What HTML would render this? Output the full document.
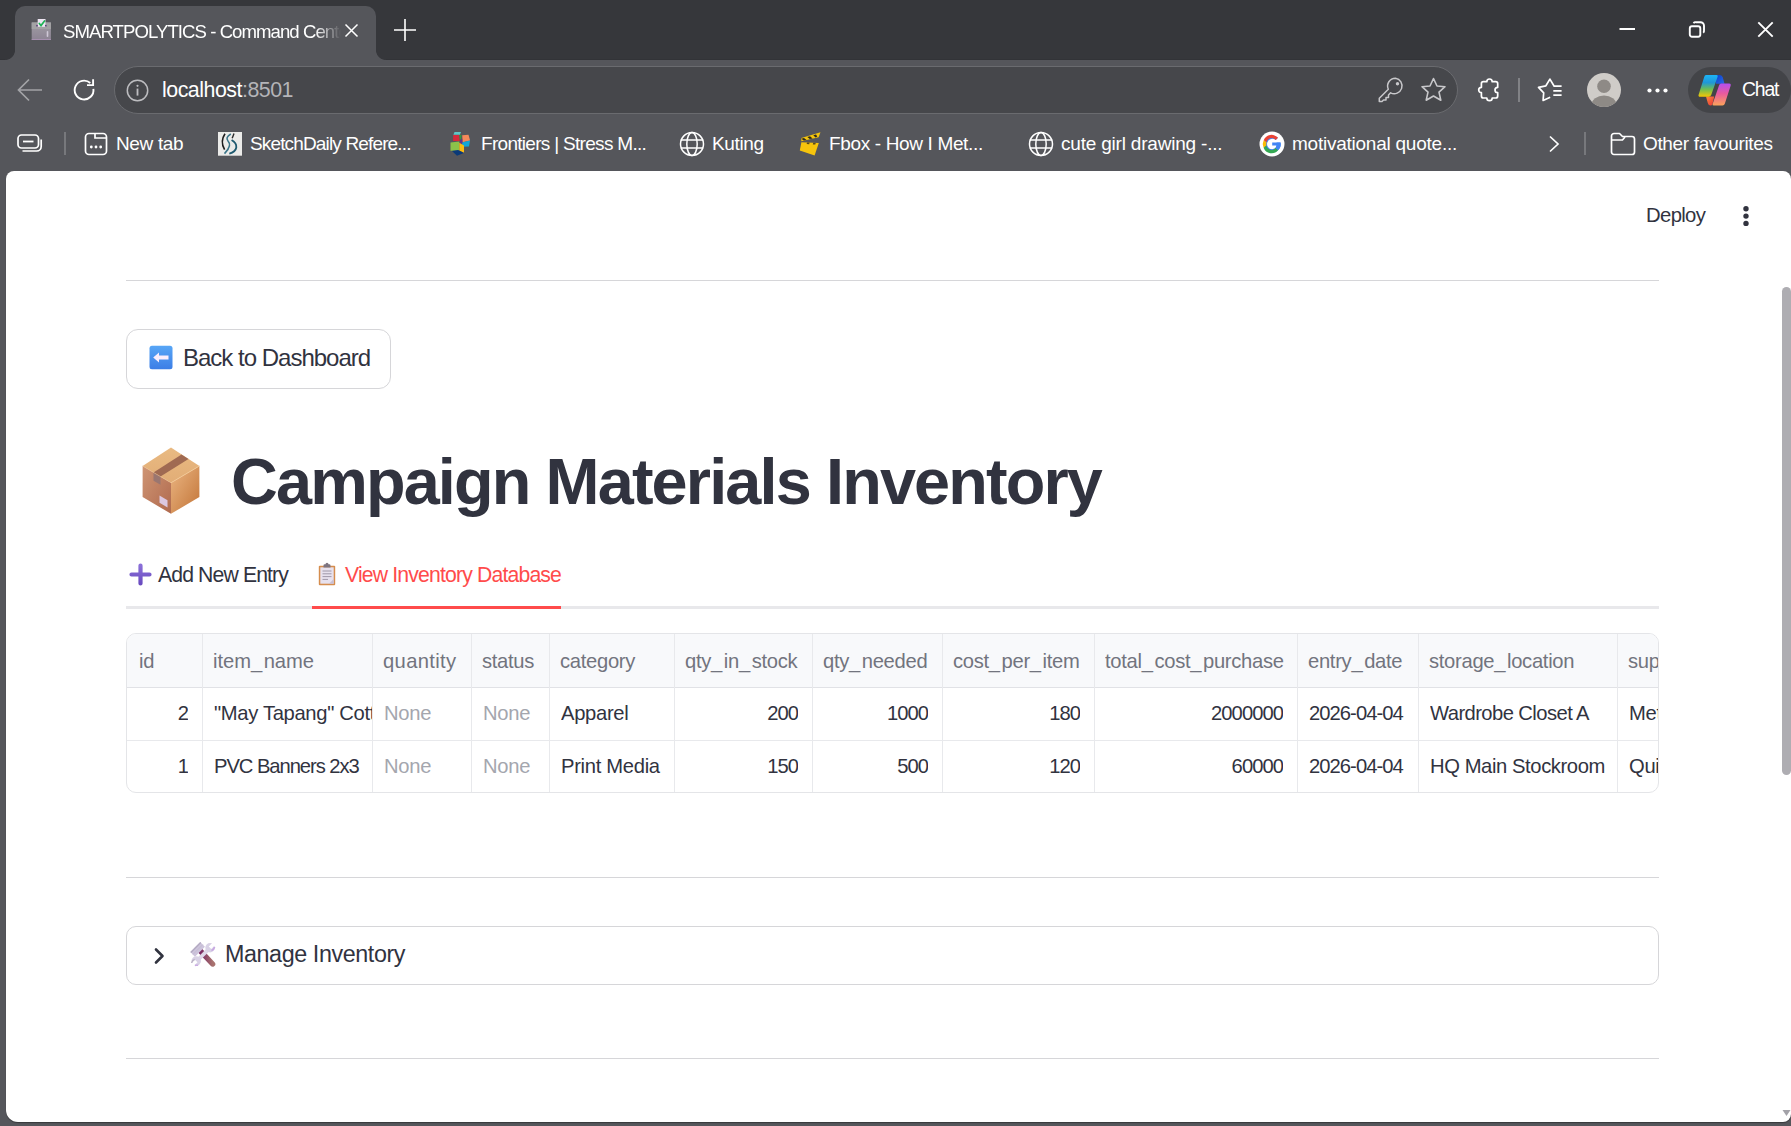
<!DOCTYPE html>
<html>
<head>
<meta charset="utf-8">
<style>
*{box-sizing:border-box;margin:0;padding:0}
html,body{width:1791px;height:1126px;overflow:hidden;background:#55565b;font-family:"Liberation Sans",sans-serif}
.abs{position:absolute}
.t{position:absolute;line-height:1;white-space:nowrap}
svg{position:absolute;overflow:visible}
/* chrome */
#strip{left:0;top:0;width:1791px;height:60px;background:#36373b;box-shadow:inset 0 -1px 0 #323337}
#tab{left:15px;top:6px;width:361px;height:54px;background:#55565b;border-radius:10px 10px 0 0}
#tab:before,#tab:after{content:"";position:absolute;bottom:0;width:10px;height:10px}
#tab:before{left:-10px;background:radial-gradient(circle at 0 0,#36373b 9.6px,#55565b 10.4px)}
#tab:after{right:-10px;background:radial-gradient(circle at 100% 0,#36373b 9.6px,#55565b 10.4px)}
#addr{left:114px;top:66px;width:1344px;height:48px;background:#46474b;border:1px solid #6a6b6f;border-radius:24px}
#chat{left:1688px;top:67px;width:103px;height:46px;background:#434448;border-radius:23px}
#content{left:6px;top:171px;width:1785px;height:951px;background:#fff;border-radius:8px 8px 8px 12px;box-shadow:0 1px 1px rgba(0,0,0,.35)}
.hr{position:absolute;left:126px;width:1533px;height:1px;background:#d6d6d9}
.st{color:#31333f}
.cell{position:absolute;line-height:28px;white-space:nowrap;overflow:hidden;font-size:20.2px;letter-spacing:-0.3px;color:#31333f}
.hd{top:12.6px;color:#72747e}
.r1{top:65px}
.r2{top:117.7px}
.nn{color:#a4a6ae}
.num{letter-spacing:-0.95px}
.u{letter-spacing:1.5px}
.bm{top:134.3px;font-size:19px;letter-spacing:-0.35px;color:#fff}
</style>
</head>
<body>
<!-- TAB STRIP -->
<div id="strip" class="abs"></div>
<div id="tab" class="abs"></div>
<!-- favicon: ballot box -->
<svg style="left:31px;top:18px" width="21" height="23" viewBox="0 0 21 23">
  <defs><linearGradient id="bb" x1="0" y1="0" x2="0" y2="1"><stop offset="0" stop-color="#a09ca4"/><stop offset="1" stop-color="#8d8494"/></linearGradient></defs>
  <rect x="0.7" y="4.5" width="19.2" height="17.5" fill="url(#bb)"/>
  <rect x="0.7" y="4.5" width="19.2" height="6.5" fill="#a3a3a5"/>
  <rect x="0.7" y="21" width="19.2" height="1" fill="#a790b0"/>
  <rect x="6.7" y="1" width="7.8" height="7.8" fill="#eee6f3"/>
  <circle cx="6" cy="7.7" r="0.9" fill="#5b3f78"/><circle cx="14.8" cy="7.7" r="0.9" fill="#5b3f78"/>
  <path d="M8.3 5.5L10 7.6L13.5 3" stroke="#1fb356" stroke-width="1.7" fill="none" stroke-linecap="round"/>
  <rect x="15.7" y="13" width="1.6" height="6" rx="0.8" fill="#cfc8d6"/>
</svg>
<div class="t" id="tabtitle" style="left:63px;top:22.6px;font-size:18.6px;letter-spacing:-0.95px;color:#fff;width:282px;overflow:hidden;-webkit-mask-image:linear-gradient(90deg,#000 252px,transparent 278px)">SMARTPOLYTICS - Command Center</div>
<svg style="left:345px;top:24px" width="13" height="13" viewBox="0 0 13 13"><path d="M0.5 0.5L12.5 12.5M12.5 0.5L0.5 12.5" stroke="#fff" stroke-width="1.5"/></svg>
<svg style="left:394px;top:19px" width="22" height="22" viewBox="0 0 22 22"><path d="M11 0V22M0 11H22" stroke="#fff" stroke-width="1.6"/></svg>
<!-- window controls -->
<svg style="left:1619px;top:22px" width="17" height="16" viewBox="0 0 17 16"><path d="M0.5 7H16" stroke="#fff" stroke-width="2"/></svg>
<svg style="left:1688px;top:21px" width="18" height="17" viewBox="0 0 18 17"><rect x="1.8" y="5.2" width="10.5" height="10.5" rx="2.2" stroke="#fff" stroke-width="1.9" fill="none"/><path d="M5.5 2.2A2.5 2.5 0 0 1 8 1.2H12.5A3.5 3.5 0 0 1 16 4.7V9.5A2.5 2.5 0 0 1 15.2 11.8" stroke="#fff" stroke-width="1.9" fill="none"/></svg>
<svg style="left:1757px;top:21px" width="17" height="17" viewBox="0 0 17 17"><path d="M1.3 1.3L15.7 15.7M15.7 1.3L1.3 15.7" stroke="#fff" stroke-width="1.9"/></svg>

<!-- TOOLBAR -->
<svg style="left:17px;top:78px" width="26" height="24" viewBox="0 0 26 24"><path d="M25 12H2M12 1.5L1.5 12L12 22.5" stroke="#a3a3a7" stroke-width="1.7" fill="none"/></svg>
<svg style="left:72px;top:78px" width="24" height="24" viewBox="0 0 24 24"><path d="M21.4 10.8A9.4 9.4 0 1 1 18.3 5" stroke="#fff" stroke-width="1.9" fill="none"/><path d="M15 7.1H21.1V1.2" stroke="#fff" stroke-width="1.9" fill="none"/></svg>
<div id="addr" class="abs"></div>
<svg style="left:126px;top:79px" width="23" height="23" viewBox="0 0 23 23"><circle cx="11.5" cy="11.5" r="10.2" stroke="#bdbdc0" stroke-width="1.5" fill="none"/><rect x="10.6" y="9.6" width="1.8" height="7" fill="#bdbdc0"/><circle cx="11.5" cy="6.8" r="1.1" fill="#bdbdc0"/></svg>
<div class="t" style="left:162px;top:79.8px;font-size:21.4px;letter-spacing:-0.5px;color:#fff">localhost<span style="color:#b4b4b8">:8501</span></div>
<!-- key -->
<svg style="left:1378px;top:77px" width="27" height="26" viewBox="0 0 27 26"><path d="M17.5 1.2A7.8 7.8 0 1 1 12.6 15.8L10.5 18L10.5 20.5L8 20.5L8 23L5.5 23L4 24.5H1.3V21.2L10.3 12.2A7.8 7.8 0 0 1 17.5 1.2Z" stroke="#c8c8cb" stroke-width="1.5" fill="none" stroke-linejoin="round"/><circle cx="19.5" cy="6.8" r="1.7" fill="#c8c8cb"/></svg>
<!-- star -->
<svg style="left:1420px;top:77px" width="27" height="26" viewBox="0 0 27 26"><path d="M13.5 1.5L17 9L25 9.7L19 15.1L20.8 23.2L13.5 19L6.2 23.2L8 15.1L2 9.7L10 9Z" stroke="#c8c8cb" stroke-width="1.6" fill="none" stroke-linejoin="round"/></svg>
<!-- puzzle -->
<svg style="left:1472px;top:74px" width="32" height="32" viewBox="0 0 32 32"><path d="M11.4 7.7H14.8A2.7 2.7 0 0 1 20.2 7.7H23.7A2 2 0 0 1 25.7 9.7V13.3A2.7 2.7 0 0 0 25.7 18.7V22A2 2 0 0 1 23.7 24H20.2A2.7 2.7 0 0 1 14.8 24H11.4A2 2 0 0 1 9.4 22V18.7A2.7 2.7 0 0 1 9.4 13.3V9.7A2 2 0 0 1 11.4 7.7Z" stroke="#fff" stroke-width="1.7" fill="none" stroke-linejoin="round"/></svg>
<div class="abs" style="left:1518px;top:78px;width:1.5px;height:24px;background:#818286"></div>
<!-- favourites -->
<svg style="left:1532px;top:74px" width="36" height="32" viewBox="0 0 36 32"><path d="M18.2 23.2L11.1 26.4L11.7 18.8L6.5 13.4L13.9 11.8L17.9 5.1L22.2 12.2H29.6M21.3 16.8H29.6M21.3 21.2H29.6" stroke="#fff" stroke-width="1.7" fill="none" stroke-linejoin="round"/></svg>
<!-- avatar -->
<svg style="left:1587px;top:73px" width="34" height="34" viewBox="0 0 34 34"><defs><clipPath id="av"><circle cx="17" cy="17" r="17"/></clipPath></defs><circle cx="17" cy="17" r="17" fill="#cfccc8"/><g clip-path="url(#av)"><circle cx="17" cy="13.2" r="6.8" fill="#8e8a86"/><ellipse cx="17" cy="32" rx="12.5" ry="9.5" fill="#8e8a86"/></g></svg>
<svg style="left:1647px;top:88px" width="22" height="5" viewBox="0 0 22 5"><circle cx="2.5" cy="2.5" r="2.1" fill="#fff"/><circle cx="10.5" cy="2.5" r="2.1" fill="#fff"/><circle cx="18.5" cy="2.5" r="2.1" fill="#fff"/></svg>
<div id="chat" class="abs"></div>
<!-- copilot -->
<svg style="left:1698px;top:74.5px" width="34" height="31" viewBox="0 0 34 31">
  <defs>
    <linearGradient id="cpl" x1="0" y1="0" x2="0" y2="1"><stop offset="0" stop-color="#1cb4f6"/><stop offset=".35" stop-color="#1f97d8"/><stop offset=".65" stop-color="#6cbd55"/><stop offset="1" stop-color="#f6c603"/></linearGradient>
    <linearGradient id="cpr" x1="0" y1="0" x2="0" y2="1"><stop offset="0" stop-color="#b54ff0"/><stop offset=".45" stop-color="#e85a9e"/><stop offset="1" stop-color="#fba35a"/></linearGradient>
    <linearGradient id="cpt" x1="0" y1="0" x2="1" y2="1"><stop offset="0" stop-color="#0b3fc7"/><stop offset="1" stop-color="#2a6ae8"/></linearGradient>
    <linearGradient id="cpb" x1="0" y1="0" x2="1" y2="1"><stop offset="0" stop-color="#ff8a3a"/><stop offset="1" stop-color="#e8313a"/></linearGradient>
  </defs>
  <path d="M17 0H22Q24 0 24.8 2.5L26.5 8.8H18Z" fill="url(#cpt)"/>
  <path d="M8 21.6H16.2L14.5 29Q14 30.5 12.5 30.5Q10.5 30.5 9.8 28Z" fill="url(#cpb)"/>
  <path d="M8 0H18.5Q20.2 0 19.7 1.6L13.2 20Q12.5 21.8 10.6 21.8H2.2Q0 21.8 0.6 19.8L6.2 2Q6.7 0 8 0Z" fill="url(#cpl)"/>
  <path d="M23.2 8.6H31.2Q33.3 8.6 32.7 10.6L26.9 28.6Q26.3 30.5 24.5 30.5H15.8Q14.1 30.5 14.6 29L21 10.4Q21.6 8.6 23.2 8.6Z" fill="url(#cpr)"/>
</svg>
<div class="t" style="left:1742px;top:80.3px;font-size:19.4px;letter-spacing:-1.2px;color:#fff">Chat</div>

<!-- BOOKMARKS -->
<svg style="left:17px;top:134px" width="26" height="19" viewBox="0 0 26 19"><rect x="1" y="1" width="20.5" height="13" rx="3.5" stroke="#fff" stroke-width="1.7" fill="none"/><path d="M6 7.5H16.5" stroke="#fff" stroke-width="1.8"/><path d="M24.2 5.5V12.5A4.5 4.5 0 0 1 19.7 17H5.5" stroke="#fff" stroke-width="1.7" fill="none"/></svg>
<div class="abs" style="left:64px;top:132px;width:1.5px;height:23px;background:#77787c"></div>
<svg style="left:84px;top:132px" width="24" height="24" viewBox="0 0 24 24"><rect x="1.5" y="1.5" width="21" height="21" rx="3.5" stroke="#fff" stroke-width="1.7" fill="none"/><path d="M11 1.8V6H22.2" stroke="#fff" stroke-width="1.7" fill="none"/><circle cx="7.3" cy="15" r="1.4" fill="#fff"/><circle cx="12" cy="15" r="1.4" fill="#fff"/><circle cx="16.7" cy="15" r="1.4" fill="#fff"/></svg>
<div class="t bm" style="left:116px">New tab</div>
<svg style="left:214px;top:128px" width="32" height="32" viewBox="0 0 32 32"><rect x="4" y="4" width="24" height="23.7" fill="#ebebe9"/><path d="M11 5.8Q5.8 13.5 10.6 21.6" stroke="#1d1d1d" stroke-width="1.6" fill="none"/><path d="M20 5.5L18.2 10.3" stroke="#2a2a2a" stroke-width="1.4"/><path d="M16.8 6Q11 9.5 14 13Q18.5 17.5 10.5 25.6" stroke="#3a7488" stroke-width="1.6" fill="none"/><path d="M17.6 12Q22.8 15 22.3 19.5Q21.5 24 15.3 25.6" stroke="#1f5a70" stroke-width="1.8" fill="none"/></svg>
<div class="t bm" style="left:250px;letter-spacing:-0.85px">SketchDaily Refere...</div>
<svg style="left:444px;top:128px" width="32" height="32" viewBox="0 0 32 32"><path d="M10.5 4H17L16 6.8H9.4Z" fill="#5ec6c6"/><path d="M9.1 7H15.3L15.8 13.1H9.1Z" fill="#d42a3c"/><path d="M15.3 7.1L17.6 7.1L17 11.4L15.8 12Z" fill="#2f9a3f"/><path d="M18.2 7.2L24.5 6.8L26.1 12.5L18.6 14.2Z" fill="#f5895a"/><path d="M15.8 12L18.2 11L18.5 18.2L16.5 16Z" fill="#6a2f8f"/><path d="M18.5 14.2L26.1 12.5L25 18.6L17.6 18.8Z" fill="#13a6d8"/><path d="M6.5 14.5L15.3 13.6V22.4L6.5 22.7Z" fill="#8bc34a"/><path d="M15.3 14.8L20 17.5V24.7L15.3 22.4Z" fill="#fdbb11"/><path d="M8 23L14 22L19.9 25L13 27.8Z" fill="#0b3a78"/></svg>
<div class="t bm" style="left:481px;letter-spacing:-0.7px">Frontiers | Stress M...</div>
<svg class="globe" style="left:679px;top:131px" width="26" height="26" viewBox="0 0 26 26"><circle cx="13" cy="13" r="11.5" stroke="#fff" stroke-width="1.5" fill="none"/><ellipse cx="13" cy="13" rx="5.2" ry="11.5" stroke="#fff" stroke-width="1.5" fill="none"/><path d="M1.8 9H24.2M1.8 17H24.2" stroke="#fff" stroke-width="1.5"/></svg>
<div class="t bm" style="left:712px">Kuting</div>
<svg style="left:794px;top:128px" width="32" height="32" viewBox="0 0 32 32"><path d="M7.4 14.2L24.8 15L20.6 27.6L5.8 22.4Z" fill="#f6c40c"/><path d="M13 14.4L15.6 14.5L15.2 16.2L12.7 16.1ZM19.2 14.7L21.8 14.8L21.3 16.6L18.8 16.4Z" fill="#5a4a1a"/><path d="M7.3 10L26.5 4.2L24.6 9.3L7.3 13.2Z" fill="#f4c40c"/><path d="M7.3 10.8L10 10L12.6 12L9.8 12.6ZM13.3 9L16 8.2L18.6 10.4L15.8 11ZM19.3 7.2L22 6.4L23.3 8.6L21.5 9.4Z" fill="#2e2a1e"/></svg>
<div class="t bm" style="left:829px">Fbox - How I Met...</div>
<svg class="globe" style="left:1028px;top:131px" width="26" height="26" viewBox="0 0 26 26"><circle cx="13" cy="13" r="11.5" stroke="#fff" stroke-width="1.5" fill="none"/><ellipse cx="13" cy="13" rx="5.2" ry="11.5" stroke="#fff" stroke-width="1.5" fill="none"/><path d="M1.8 9H24.2M1.8 17H24.2" stroke="#fff" stroke-width="1.5"/></svg>
<div class="t bm" style="left:1061px;letter-spacing:-0.2px">cute girl drawing -...</div>
<svg style="left:1259px;top:131px" width="26" height="26" viewBox="0 0 26 26"><circle cx="13" cy="13" r="12.5" fill="#fff"/><path d="M20.6 11.4H13.2V14.6H17.6C17.1 16.8 15.4 18.2 13.2 18.2A5.2 5.2 0 1 1 16.7 9.1L19 6.8A8.5 8.5 0 1 0 21.7 13C21.7 12.4 21.6 11.9 21.5 11.4Z" fill="#4285f4"/><path d="M4.7 9.2L7.5 11.3A5.2 5.2 0 0 1 16.7 9.1L19 6.8A8.5 8.5 0 0 0 4.7 9.2Z" fill="#ea4335"/><path d="M4.7 9.2A8.5 8.5 0 0 0 4.6 16.7L7.4 14.6A5.2 5.2 0 0 1 7.5 11.3Z" fill="#fbbc05"/><path d="M4.6 16.7A8.5 8.5 0 0 0 19.2 19.1L16.6 17A5.2 5.2 0 0 1 7.4 14.6Z" fill="#34a853"/><path d="M19.2 19.1A8.3 8.3 0 0 0 21.5 11.4H17.6V14.6C17.3 15.6 17 16.4 16.6 17Z" fill="#4285f4"/></svg>
<div class="t bm" style="left:1292px;letter-spacing:-0.24px">motivational quote...</div>
<svg style="left:1547px;top:135px" width="16" height="18" viewBox="0 0 16 18"><path d="M3 1.5L11 9L3 16.5" stroke="#fff" stroke-width="1.7" fill="none"/></svg>
<div class="abs" style="left:1584px;top:132px;width:1.5px;height:23px;background:#77787c"></div>
<svg style="left:1610px;top:132px" width="26" height="24" viewBox="0 0 26 24"><path d="M1.5 4A2.5 2.5 0 0 1 4 1.5H9.5L12.5 4.5H22A2.5 2.5 0 0 1 24.5 7V20A2.5 2.5 0 0 1 22 22.5H4A2.5 2.5 0 0 1 1.5 20Z" stroke="#fff" stroke-width="1.7" fill="none" stroke-linejoin="round"/><path d="M1.5 8H12.5L15 5" stroke="#fff" stroke-width="1.7" fill="none"/></svg>
<div class="t bm" style="left:1643px">Other favourites</div>

<!-- CONTENT -->
<div id="content" class="abs"></div>
<div class="t st" style="left:1646px;top:204.5px;font-size:20.3px;letter-spacing:-0.65px">Deploy</div>
<svg style="left:1743px;top:206px" width="6" height="20" viewBox="0 0 6 20"><circle cx="3" cy="2.8" r="2.7" fill="#31333f"/><circle cx="3" cy="10.1" r="2.7" fill="#31333f"/><circle cx="3" cy="17.4" r="2.7" fill="#31333f"/></svg>
<div class="hr" style="top:280px"></div>

<!-- back button -->
<div class="abs" style="left:126px;top:329px;width:265px;height:60px;border:1px solid #d6d6d9;border-radius:12px"></div>
<svg style="left:149px;top:345px" width="24" height="25" viewBox="0 0 24 25"><defs><linearGradient id="ab" x1="0" y1="0" x2="0" y2="1"><stop offset="0" stop-color="#58a6f6"/><stop offset="1" stop-color="#3c7ee6"/></linearGradient></defs><rect x="0.5" y="0.8" width="23" height="23.4" rx="2.5" fill="url(#ab)"/><path d="M4.2 12.5L10 7.5V10.6H19.5V14.4H10V17.5Z" fill="#fbeefc"/></svg>
<div class="t st" style="left:183px;top:346px;font-size:24px;letter-spacing:-1px">Back to Dashboard</div>

<!-- title -->
<svg style="left:141px;top:446px" width="60" height="70" viewBox="0 0 60 70">
 <defs>
  <linearGradient id="bxl" x1="0" y1="0" x2="1" y2="1"><stop offset="0" stop-color="#cf9574"/><stop offset="1" stop-color="#b06a4e"/></linearGradient>
  <linearGradient id="bxr" x1="0" y1="0" x2="1" y2="1"><stop offset="0" stop-color="#ebb683"/><stop offset="1" stop-color="#c27437"/></linearGradient>
  <linearGradient id="bxt" x1="0" y1="0" x2="0" y2="1"><stop offset="0" stop-color="#e9ba82"/><stop offset="1" stop-color="#e2ad76"/></linearGradient>
 </defs>
 <path d="M1.6 20L30 36.8V67.8L1.6 51Z" fill="url(#bxl)"/>
 <path d="M30 36.8L58.4 20V51L30 67.8Z" fill="url(#bxr)"/>
 <path d="M30 1.6L58.4 20L30 36.8L1.6 20Z" fill="url(#bxt)"/>
 <path d="M12.5 26.4L40.5 8.5L47.5 13.1L19.5 30.5Z" fill="#a06a52"/>
 <path d="M12.5 26.4L19.5 30.5V38.8L12.5 34.7Z" fill="#9a7670"/>
 <path d="M18.5 49.5L26.5 54.2V61.5L18.5 56.8Z" fill="#dcc8e0"/>
 <path d="M30 36.8L58.4 20" stroke="#f3c996" stroke-width="0.8"/>
 <path d="M1.6 20L30 36.8" stroke="#e8b98a" stroke-width="0.6"/>
</svg>
<div class="t st" style="left:231px;top:450.3px;font-size:64.8px;font-weight:700;letter-spacing:-1.85px">Campaign Materials Inventory</div>

<!-- tabs -->
<svg style="left:129px;top:563px" width="23" height="23" viewBox="0 0 23 23"><defs><linearGradient id="pl" x1="0" y1="0" x2="0" y2="1"><stop offset="0" stop-color="#8a6fd8"/><stop offset="1" stop-color="#6a4cc0"/></linearGradient></defs><path d="M11.5 2.5V20.5M2.5 11.5H20.5" stroke="url(#pl)" stroke-width="4.2" stroke-linecap="round"/></svg>
<div class="t st" style="left:158px;top:564.3px;font-size:21.2px;letter-spacing:-0.87px">Add New Entry</div>
<svg style="left:318px;top:563px" width="18" height="23" viewBox="0 0 18 23"><rect x="0.8" y="2.8" width="16.4" height="19.4" rx="1" fill="#d58d4e"/><rect x="2.3" y="4.3" width="13.4" height="16.4" fill="#e7e1ee"/><path d="M11 20.7L15.7 16V20.7Z" fill="#c9bfd3"/><path d="M5.5 4.5V2.5A1.2 1.2 0 0 1 6.7 1.3H7.5A1.5 1.5 0 0 1 10.5 1.3H11.3A1.2 1.2 0 0 1 12.5 2.5V4.5Z" fill="#7d7480"/><path d="M4.5 8H13.5M4.5 10.8H13.5M4.5 13.6H13.5M4.5 16.4H10" stroke="#9f98a8" stroke-width="1"/></svg>
<div class="t" style="left:345px;top:564.3px;font-size:21.2px;letter-spacing:-0.83px;color:#ff4b4b">View Inventory Database</div>
<div class="abs" style="left:126px;top:606px;width:1533px;height:3px;background:#e8e8eb"></div>
<div class="abs" style="left:312px;top:606px;width:249px;height:3px;background:#ff4b4b"></div>

<!-- table -->
<div class="abs" style="left:126px;top:633px;width:1533px;height:160px;border:1px solid #e4e5e8;border-radius:10px;overflow:hidden">
<div class="abs" style="left:0;top:0;width:1533px;height:54px;background:#f8f9fb"></div>
<div class="abs" style="left:0;top:53px;width:1533px;height:1px;background:#e1e2e6"></div>
<div class="abs" style="left:0;top:106px;width:1533px;height:1px;background:#e8e9ec"></div>
<div class="abs" style="left:75px;top:0;width:1px;height:160px;background:#e8e9ec"></div>
<div class="abs" style="left:245px;top:0;width:1px;height:160px;background:#e8e9ec"></div>
<div class="abs" style="left:344px;top:0;width:1px;height:160px;background:#e8e9ec"></div>
<div class="abs" style="left:422px;top:0;width:1px;height:160px;background:#e8e9ec"></div>
<div class="abs" style="left:547px;top:0;width:1px;height:160px;background:#e8e9ec"></div>
<div class="abs" style="left:685px;top:0;width:1px;height:160px;background:#e8e9ec"></div>
<div class="abs" style="left:815px;top:0;width:1px;height:160px;background:#e8e9ec"></div>
<div class="abs" style="left:967px;top:0;width:1px;height:160px;background:#e8e9ec"></div>
<div class="abs" style="left:1170px;top:0;width:1px;height:160px;background:#e8e9ec"></div>
<div class="abs" style="left:1291px;top:0;width:1px;height:160px;background:#e8e9ec"></div>
<div class="abs" style="left:1490px;top:0;width:1px;height:160px;background:#e8e9ec"></div>
<div class="cell hd" style="left:12px;width:63px">id</div>
<div class="cell hd" style="left:86px;width:159px;letter-spacing:-0.05px">item<span class="u">_</span>name</div>
<div class="cell hd" style="left:256px;width:88px;letter-spacing:0.35px">quantity</div>
<div class="cell hd" style="left:355px;width:67px">status</div>
<div class="cell hd" style="left:433px;width:114px">category</div>
<div class="cell hd" style="left:558px;width:127px">qty<span class="u">_</span>in<span class="u">_</span>stock</div>
<div class="cell hd" style="left:696px;width:119px">qty<span class="u">_</span>needed</div>
<div class="cell hd" style="left:826px;width:141px">cost<span class="u">_</span>per<span class="u">_</span>item</div>
<div class="cell hd" style="left:978px;width:192px">total<span class="u">_</span>cost<span class="u">_</span>purchase</div>
<div class="cell hd" style="left:1181px;width:110px">entry<span class="u">_</span>date</div>
<div class="cell hd" style="left:1302px;width:188px">storage<span class="u">_</span>location</div>
<div class="cell hd" style="left:1501px;width:31px">supplier</div>
<div class="cell r1 num" style="left:-1px;width:62px;text-align:right">2</div>
<div class="cell r1" style="left:87px;width:158px;letter-spacing:-0.33px">&quot;May Tapang&quot; Cotton Shirts</div>
<div class="cell r1 nn" style="left:257px;width:87px">None</div>
<div class="cell r1 nn" style="left:356px;width:66px">None</div>
<div class="cell r1" style="left:434px;width:113px;letter-spacing:-0.3px">Apparel</div>
<div class="cell r1 num" style="left:547px;width:124px;text-align:right">200</div>
<div class="cell r1 num" style="left:685px;width:116px;text-align:right">1000</div>
<div class="cell r1 num" style="left:815px;width:138px;text-align:right">180</div>
<div class="cell r1 num" style="left:967px;width:189px;text-align:right">2000000</div>
<div class="cell r1 num" style="left:1182px;width:109px">2026-04-04</div>
<div class="cell r1" style="left:1303px;width:187px;letter-spacing:-0.57px">Wardrobe Closet A</div>
<div class="cell r1" style="left:1502px;width:30px">Metro Prints</div>
<div class="cell r2 num" style="left:-1px;width:62px;text-align:right">1</div>
<div class="cell r2" style="left:87px;width:158px;letter-spacing:-1.05px">PVC Banners 2x3</div>
<div class="cell r2 nn" style="left:257px;width:87px">None</div>
<div class="cell r2 nn" style="left:356px;width:66px">None</div>
<div class="cell r2" style="left:434px;width:113px;letter-spacing:-0.3px">Print Media</div>
<div class="cell r2 num" style="left:547px;width:124px;text-align:right">150</div>
<div class="cell r2 num" style="left:685px;width:116px;text-align:right">500</div>
<div class="cell r2 num" style="left:815px;width:138px;text-align:right">120</div>
<div class="cell r2 num" style="left:967px;width:189px;text-align:right">60000</div>
<div class="cell r2 num" style="left:1182px;width:109px">2026-04-04</div>
<div class="cell r2" style="left:1303px;width:187px;letter-spacing:-0.4px">HQ Main Stockroom</div>
<div class="cell r2" style="left:1502px;width:30px">Quick Print</div>
</div>


<div class="hr" style="top:877px"></div>
<div class="abs" style="left:126px;top:926px;width:1533px;height:59px;border:1px solid #d6d6d9;border-radius:10px"></div>
<svg style="left:153px;top:947px" width="13" height="18" viewBox="0 0 13 18"><path d="M3 2.5L9.5 9L3 15.5" stroke="#31333f" stroke-width="2.6" fill="none" stroke-linecap="round" stroke-linejoin="round"/></svg>
<svg style="left:186px;top:938px" width="34" height="32" viewBox="0 0 34 32">
 <defs>
  <linearGradient id="hm" x1="0" y1="0" x2="1" y2="0"><stop offset="0" stop-color="#7a2a64"/><stop offset="1" stop-color="#a8726e"/></linearGradient>
  <linearGradient id="wr" x1="0" y1="0" x2="1" y2="1"><stop offset="0" stop-color="#b9b3c6"/><stop offset=".5" stop-color="#e0daea"/><stop offset="1" stop-color="#cdb0e6"/></linearGradient>
 </defs>
 <path d="M14.8 13.4L26.6 26" stroke="url(#hm)" stroke-width="5.4" stroke-linecap="round"/>
 <path d="M8.98 18.68L4.32 14.02L14.22 4.12L18.88 8.78Z" fill="#cdc4dc"/>
 <path d="M4.32 14.02L14.22 4.12L15.2 5.1L5.3 15Z" fill="#b3abc2"/>
 <path d="M7 16.4L16.9 6.5" stroke="#bdb5cc" stroke-width="0.7"/>
 <path d="M10.8 23L23.5 10.3" stroke="url(#wr)" stroke-width="3.8"/>
 <circle cx="24" cy="9.8" r="4.7" fill="#d9d2e6"/>
 <circle cx="10.2" cy="23" r="4.7" fill="#d9d2e6"/>
 <path d="M25.27 11.07L22.73 8.53L26.97 4.29L29.51 6.83Z" fill="#fff"/>
 <path d="M11.47 24.27L8.93 21.73L4.69 25.97L7.23 28.51Z" fill="#fff"/>
 <path d="M25.5 12.5A4.7 4.7 0 0 0 28.6 9" stroke="#c7a6e2" stroke-width="1.6" fill="none"/>
 <path d="M8.7 21.3A4.7 4.7 0 0 0 5.6 25" stroke="#bbb4c6" stroke-width="1.4" fill="none"/>
 <path d="M12.2 27.3A4.7 4.7 0 0 0 9 27.5" stroke="#c7a6e2" stroke-width="1.4" fill="none"/>
</svg>
<div class="t st" style="left:225px;top:943.3px;font-size:23.3px;letter-spacing:-0.4px">Manage Inventory</div>
<div class="hr" style="top:1058px"></div>
<div class="abs" style="left:1782px;top:287px;width:9px;height:488px;background:#aeadb2;border-radius:4.5px"></div>
<svg style="left:1782px;top:1109px" width="9" height="8" viewBox="0 0 9 8"><path d="M0.5 1H8.5L4.5 7Z" fill="#a3a2a8"/></svg>
</body>
</html>
